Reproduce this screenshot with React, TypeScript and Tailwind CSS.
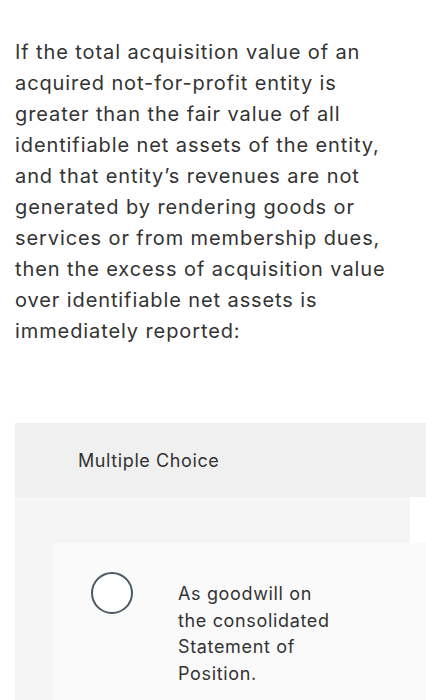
import React from "react";

const question = [
  "If the total acquisition value of an",
  "acquired not-for-profit entity is",
  "greater than the fair value of all",
  "identifiable net assets of the entity,",
  "and that entity\u2019s revenues are not",
  "generated by rendering goods or",
  "services or from membership dues,",
  "then the excess of acquisition value",
  "over identifiable net assets is",
  "immediately reported:",
];

const answer = ["As goodwill on", "the consolidated", "Statement of", "Position."];

export default function App() {
  return (
    <div
      className="w-[426px] h-[700px] bg-white overflow-hidden text-[#333333] [font-variant-ligatures:none]"
      style={{ fontFamily: "Inter, sans-serif" }}
    >
      <p className="pl-[15px] pt-[37px] text-[20px] leading-[31px] tracking-[0.9px]">
        {question.map((l, i) => (
          <span key={i} className="block whitespace-nowrap">
            {l}
          </span>
        ))}
      </p>
      <div className="mt-[76px] ml-[15px]">
        <div className="h-[74px] bg-[#f0f0f0] flex items-center pl-[63px]">
          <span className="text-[18px] tracking-[0.6px]">Multiple Choice</span>
        </div>
        <div className="w-[395px] bg-[#f5f5f5] pt-[46px] pl-[38px] h-[300px]">
          <div className="w-[373px] bg-[#fafafa] h-[300px] flex items-start pt-[29px] pl-[38px]">
            <div className="w-[42px] h-[42px] rounded-full border-2 border-[#4b5866] bg-white shrink-0" />
            <div className="ml-[45px] mt-[9px] text-[18px] leading-[26.5px] tracking-[0.65px]">
              {answer.map((l, i) => (
                <span key={i} className="block whitespace-nowrap">
                  {l}
                </span>
              ))}
            </div>
          </div>
        </div>
      </div>
    </div>
  );
}
